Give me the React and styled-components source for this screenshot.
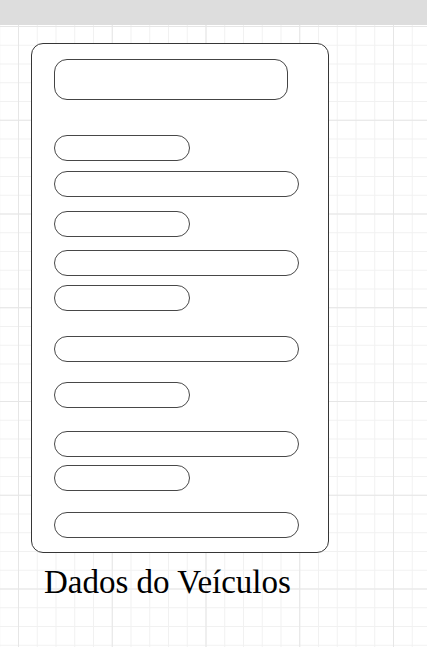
import React from 'react';
import styled, { createGlobalStyle } from 'styled-components';

const GlobalStyle = createGlobalStyle`
  html, body {
    margin: 0;
    padding: 0;
    background: #ffffff;
  }
  * {
    box-sizing: border-box;
  }
`;

const StyledPage = styled.div`
  display: flex;
  flex-direction: column;
  min-height: 100vh;
`;

const StyledTopBar = styled.div`
  height: 25px;
  background-color: #dddddd;
`;

const StyledCanvas = styled.div`
  flex: 1;
  display: flex;
  flex-direction: column;
  align-items: flex-start;
  padding: 18px 0 0 31px;
  background-color: #ffffff;
  background-image:
    linear-gradient(to right, #e6e6e6 1px, transparent 1px),
    linear-gradient(to bottom, #e6e6e6 1px, transparent 1px),
    linear-gradient(to right, #f1f1f1 1px, transparent 1px),
    linear-gradient(to bottom, #f1f1f1 1px, transparent 1px);
  background-size: 93.75px 93.75px, 93.75px 93.75px, 18.75px 18.75px, 18.75px 18.75px;
  background-position: 18px 1px, 18px 1px, 18px 1px, 18px 1px;
`;

const StyledCard = styled.div`
  display: flex;
  flex-direction: column;
  align-items: flex-start;
  width: 298px;
  height: 510px;
  padding: 15px 0 0 22px;
  background-color: #ffffff;
  border: 1px solid #363636;
  border-radius: 12px;
`;

const StyledTitleField = styled.div`
  width: 234px;
  height: 41px;
  border: 1px solid #444444;
  border-radius: 13px;
`;

const StyledField = styled.div`
  width: ${({ $long }) => ($long ? '245px' : '136px')};
  height: 26px;
  margin-top: ${({ $gap }) => $gap}px;
  border: 1px solid #484848;
  border-radius: 13px;
`;

const StyledCaption = styled.p`
  margin: 11px 0 0 13px;
  font-family: 'Liberation Serif', 'Times New Roman', serif;
  font-size: 33px;
  color: #000000;
`;

const fields = [
  { gap: 35, long: false },
  { gap: 10, long: true },
  { gap: 14, long: false },
  { gap: 13, long: true },
  { gap: 9, long: false },
  { gap: 25, long: true },
  { gap: 20, long: false },
  { gap: 23, long: true },
  { gap: 8, long: false },
  { gap: 21, long: true },
];

const App = () => (
  <>
    <GlobalStyle />
    <StyledPage>
      <StyledTopBar />
      <StyledCanvas>
        <StyledCard>
          <StyledTitleField />
          {fields.map((field, i) => (
            <StyledField key={i} $gap={field.gap} $long={field.long} />
          ))}
        </StyledCard>
        <StyledCaption>Dados do Veículos</StyledCaption>
      </StyledCanvas>
    </StyledPage>
  </>
);

export default App;
